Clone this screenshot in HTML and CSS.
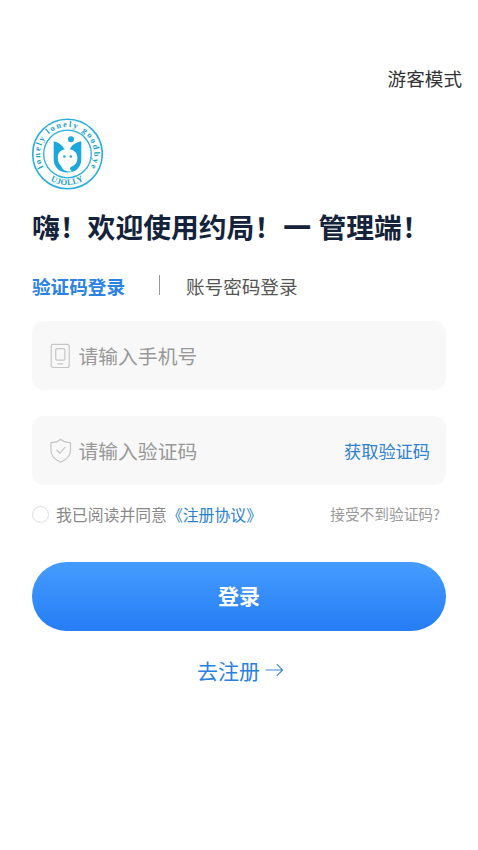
FILE: index.html
```html
<!DOCTYPE html>
<html lang="zh-CN">
<head>
<meta charset="utf-8">
<title>登录</title>
<link rel="stylesheet" href="styles.css">
</head>
<body>
<main class="page">
  <header class="top"><a class="guest">游客模式</a></header>
  <svg class="logo" viewBox="0 0 72 72" role="img">
    <defs>
      <path id="arc-top" d="M12.4 49.2A27 27 0 1 1 59.6 49.2"/>
      <path id="arc-bottom" d="M10 53A31 31 0 0 0 62 53"/>
    </defs>
    <circle class="ring" cx="36.5" cy="36" r="34.8"/>
    <circle class="ring ring-inner" cx="36.5" cy="36" r="23.8"/>
    <text class="seal"><textPath href="#arc-top" startOffset="0" textLength="112">lonely lonely goodbye</textPath></text>
    <text class="seal seal-name"><textPath href="#arc-bottom" startOffset="50%" text-anchor="middle" textLength="35">UJOLLY</textPath></text>
    <circle class="fill" cx="40" cy="21.3" r="3"/>
    <path class="fill" d="M22.7 23.2C27 24 31 26.5 33.3 31L36 32.5L39 31C41 26.5 45.5 24 50.3 23.2V41C50.3 49 45 54.6 36.7 54.6C28.1 54.6 22.7 49 22.7 41Z"/>
    <path class="face" d="M26.8 39C27 33.8 31 31 36.5 31C42.5 31 46.4 34.5 46.4 40C46.4 44.5 44 47.8 39.4 49.2C38.5 51 39.5 52.6 41.6 53.5C35.5 54 31.5 52.3 30.2 48C28 45.8 26.5 43 26.8 39Z"/>
    <circle class="fill" cx="33.4" cy="38.5" r="1.2"/>
    <circle class="fill" cx="39.8" cy="38.5" r="1.2"/>
  </svg>
  <h1 class="title">嗨！欢迎使用约局！<span class="dash">一</span>管理端！</h1>
  <nav class="tabs">
    <a class="tab active">验证码登录</a>
    <i class="divider"></i>
    <a class="tab">账号密码登录</a>
  </nav>
  <form class="form">
    <div class="field">
      <svg class="icon" viewBox="0 0 22 26"><rect x="1.2" y="1.3" width="18" height="23.2" rx="2"/><rect x="5.7" y="5.6" width="9.2" height="11.6" rx="1.5"/><path d="M7.8 20.8h5"/></svg>
      <span class="hint">请输入手机号</span>
    </div>
    <div class="field">
      <svg class="icon" viewBox="0 0 22 26"><path d="M10.7 1.2C13.5 3.5 17 4.6 20.5 4.7V12.3C20.5 18 17 21.5 10.7 24.3C4.5 21.5 .9 18 .9 12.3V4.7C4.5 4.6 8 3.5 10.7 1.2Z"/><path d="M6.8 12.2l3.1 3 5-5.8"/></svg>
      <span class="hint">请输入验证码</span>
      <a class="code">获取验证码</a>
    </div>
    <div class="terms">
      <i class="radio"></i>
      <span class="agree">我已阅读并同意<a class="link">《注册协议》</a></span>
      <a class="help">接受不到验证码?</a>
    </div>
    <div class="submit">登录</div>
  </form>
  <a class="register">去注册<svg class="arrow" viewBox="0 0 19 14"><path d="M.5 7H17.5M11.8 1.2L17.6 7L11.8 12.8"/></svg></a>
</main>
</body>
</html>
```

FILE: styles.css
```css
* { box-sizing: border-box; }
body {
  margin: 0;
  background: #fff;
  font-family: "Noto Sans CJK SC", sans-serif;
}
.page {
  display: flex;
  flex-direction: column;
  height: 850px;
  padding: 64px 32px 0;
  white-space: nowrap;
}
.top {
  display: flex;
  justify-content: flex-end;
  margin-right: -16px;
  height: 54px;
}
.guest { font-size: 18.6px; line-height: 28px; color: #333; }
.logo { width: 72px; height: 72px; margin-left: -1px; }
.ring { fill: none; stroke: #27afe0; stroke-width: 1.6; }
.ring-inner { stroke-width: 1.3; }
.fill { fill: #1ba8dc; }
.face { fill: #fff; }
.seal {
  font: bold 8.6px "Liberation Serif", serif;
  fill: #249fc8;
}
.seal-name { font-size: 8.6px; }
.title {
  margin: 16px 0 0;
  font-size: 27.8px;
  line-height: 40px;
  font-weight: 700;
  color: #14233a;
}
.dash { margin: 0 7.5px 0 1px; }
.tabs {
  display: flex;
  align-items: center;
  height: 28px;
  margin-top: 25px;
  font-size: 18.6px;
}
.tab { color: #555; }
.active { font-weight: 700; color: #2b82e2; }
.divider {
  width: 1px;
  height: 20px;
  margin: 0 26px 0 34px;
  background: #999;
}
.form { width: 414px; margin-top: 22px; }
.field {
  display: flex;
  align-items: center;
  height: 69px;
  margin-bottom: 26px;
  padding: 0 16px 0 18px;
  border-radius: 12px;
  background: #f8f8f8;
}
.icon {
  width: 22px;
  height: 26px;
  margin-right: 6.5px;
  fill: none;
  stroke: #c5c5c5;
  stroke-width: 1.2;
  stroke-linecap: round;
  stroke-linejoin: round;
}
.hint { font-size: 19.8px; color: #999; }
.code { margin-left: auto; font-size: 17.2px; color: #2f80d0; }
.terms {
  display: flex;
  align-items: center;
  height: 24px;
  margin-top: -9px;
}
.radio {
  width: 17px;
  height: 17px;
  margin-right: 7px;
  border: 1px solid #ddd;
  border-radius: 50%;
}
.agree { font-size: 15.85px; color: #888; }
.link { color: #2b80d0; }
.help { margin: -2px 6px 0 auto; font-size: 14.7px; color: #999; }
.submit {
  height: 69px;
  margin-top: 36px;
  border-radius: 35px;
  background: linear-gradient(#459cff, #267df4);
  color: #fff;
  font-size: 21px;
  font-weight: 700;
  line-height: 67px;
  text-align: center;
}
.register {
  display: flex;
  align-items: center;
  height: 32px;
  margin: 23px 0 0 165px;
  font-size: 21px;
  color: #2b80dc;
}
.arrow {
  width: 19px;
  height: 14px;
  margin-left: 5px;
  fill: none;
  stroke: #4089cf;
  stroke-width: 1.2;
}
```
